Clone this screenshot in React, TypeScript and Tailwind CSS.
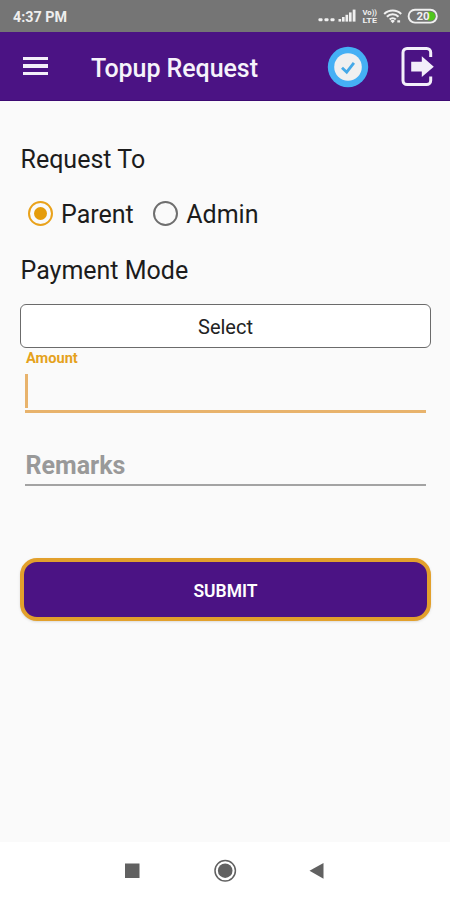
import { useState } from 'react';

const StatusIcons = () => (
  <svg width="124" height="20" viewBox="0 0 124 20" fill="#f0f0f0">
    <rect x="2.5" y="12.2" width="4" height="3" rx="1" />
    <rect x="8.5" y="12.2" width="4" height="3" rx="1" />
    <rect x="14.5" y="12.2" width="4" height="3" rx="1" />

    <rect x="22.5" y="13" width="2.6" height="2.6" />
    <rect x="26" y="11" width="2.6" height="4.6" />
    <rect x="29.5" y="8.8" width="2.6" height="6.8" />
    <rect x="33" y="6.4" width="2.6" height="9.2" />
    <rect x="36.7" y="3.6" width="2.8" height="12" />

    <text x="46.5" y="8.6" fontSize="6.5" fontWeight="700" textLength="14.5" lengthAdjust="spacingAndGlyphs">Vo))</text>
    <text x="46.5" y="16.8" fontSize="7" fontWeight="700" textLength="14.5" lengthAdjust="spacingAndGlyphs">LTE</text>

    <g fill="none" stroke="#f0f0f0" strokeWidth="2.1">
      <path d="M68.2 7.9a12.2 12.2 0 0 1 17 0" />
      <path d="M70.9 10.7a8.2 8.2 0 0 1 11.6 0" />
      <path d="M73.7 13.4a4.3 4.3 0 0 1 6 0" />
    </g>
    <path d="M74.5 14.9a3.2 3.2 0 0 1 4.4 0l-2.2 2.3z" />
    <rect x="81.3" y="14.3" width="2.8" height="2.2" />

    <rect x="92.6" y="3.8" width="28.2" height="12.8" rx="6.4" fill="none" stroke="#f0f0f0" strokeWidth="1.9" />
    <path d="M112 5.8h2.8a4.4 4.4 0 0 1 0 8.8H112z" fill="#4fc61c" />
    <text x="100.5" y="14.3" fontSize="11.5" fontWeight="700">20</text>
  </svg>
);

const LogoutIcon = () => (
  <svg width="34" height="40" viewBox="0 0 34 40">
    <path d="M29.7 10V5.5a4 4 0 0 0-4-4H6a4 4 0 0 0-4 4v28a4 4 0 0 0 4 4h19.7a4 4 0 0 0 4-4V29.5" fill="none" stroke="#f3effa" strokeWidth="3" />
    <path d="M10.2 14.7h10.6V9.3L32.8 19.7 20.8 30v-5.4H10.2z" fill="#f3effa" />
  </svg>
);

const TickIcon = () => (
  <svg width="42" height="42" viewBox="0 0 42 42">
    <circle cx="21" cy="21" r="20.2" fill="#45b0f5" />
    <circle cx="21" cy="21" r="13.8" fill="#f0f0f0" />
    <path d="M15 21.7l4.7 4.5 7.2-9.4" fill="none" stroke="#45a9e8" strokeWidth="2.8" />
  </svg>
);

interface RadioProps {
  label: string;
  checked: boolean;
  onChange: () => void;
}

const Radio = ({ label, checked, onChange }: RadioProps) => (
  <button type="button" role="radio" aria-checked={checked} onClick={onChange} className="flex items-center">
    <span className={`w-[25px] h-[25px] mb-[3px] rounded-full border-2 flex items-center justify-center ${checked ? 'border-[#e9a21b]' : 'border-[#6e6e6e]'}`}>
      {checked && <span className="w-[13px] h-[13px] rounded-full bg-[#e59c0a]"></span>}
    </span>
    <span className="ml-2 text-[25px] leading-8 text-[#1c1c1c]">{label}</span>
  </button>
);

export default function App() {
  const [requestTo, setRequestTo] = useState('Parent');

  return (
    <div className="w-[450px] h-[900px] flex flex-col overflow-hidden bg-[#fafafa] font-['Roboto',sans-serif]">
      <div className="h-8 shrink-0 bg-[#757575] flex items-center justify-between pl-[13px] pr-[10px]">
        <span className="pt-px text-[14.3px] font-bold text-[#eeeeee] leading-8">4:37 PM</span>
        <StatusIcons />
      </div>

      <header className="h-[69px] shrink-0 bg-[#4b1384] border-b border-[#3c0a72] flex items-center pl-[23px] pr-[15px]">
        <button type="button" aria-label="Menu" className="w-[25px] flex flex-col gap-[4px]">
          <span className="h-[3.5px] bg-[#f3effa]"></span>
          <span className="h-[3.5px] bg-[#f3effa]"></span>
          <span className="h-[3.5px] bg-[#f3effa]"></span>
        </button>
        <h1 className="ml-[43px] pt-[5px] text-[25px] leading-8 font-medium tracking-[-0.06px] text-[#f6f3fb]">Topup Request</h1>
        <div className="ml-auto pt-px flex items-center gap-[32px]">
          <TickIcon />
          <LogoutIcon />
        </div>
      </header>

      <main className="flex-1 pl-[20px] pr-[19px] pt-[43px] flex flex-col">
        <h2 className="pl-[0.5px] text-[25px] leading-8 text-[#1c1c1c]">Request To</h2>

        <div role="radiogroup" className="mt-[23px] pl-2 flex gap-[19.5px]">
          <Radio label="Parent" checked={requestTo === 'Parent'} onChange={() => setRequestTo('Parent')} />
          <Radio label="Admin" checked={requestTo === 'Admin'} onChange={() => setRequestTo('Admin')} />
        </div>

        <h2 className="mt-[24px] pl-[0.5px] text-[25px] leading-8 text-[#1c1c1c]">Payment Mode</h2>

        <button type="button" className="mt-[17px] h-[44px] pt-[2px] shrink-0 bg-white border border-[#6b6b6b] rounded-md text-[20px] text-[#222222]">
          Select
        </button>

        <div className="px-[5px]">
          <label className="block pl-px pt-[2px] text-[14.6px] leading-4 font-bold text-[#e5a21c]">Amount</label>
          <div className="mt-[8px] h-[39px] border-b-[3px] border-[#e8b36c]">
            <div className="w-[3px] h-[34px] bg-[#e8b36c]"></div>
          </div>
          <div className="mt-[35px] h-[38px] pl-[0.5px] border-b-2 border-[#a3a3a3] text-[25px] leading-[36px] font-bold text-[#999999]">
            Remarks
          </div>
        </div>

        <button type="submit" className="mt-[72px] h-[63px] pt-[3px] shrink-0 rounded-[17px] border-4 border-[#e2a02c] bg-[#4b1384] text-[17.5px] font-semibold text-white shadow-sm">
          SUBMIT
        </button>
      </main>

      <nav className="h-[58px] shrink-0 bg-white">
        <svg width="450" height="58" viewBox="0 0 450 58" fill="#616161">
          <rect x="125" y="21.5" width="14.5" height="14.5" />
          <circle cx="225.2" cy="28.7" r="10.2" fill="none" stroke="#616161" strokeWidth="1.5" />
          <circle cx="225.2" cy="28.7" r="7.3" />
          <path d="M309.5 28.8L323.5 21v15.8z" />
        </svg>
      </nav>
    </div>
  );
}
